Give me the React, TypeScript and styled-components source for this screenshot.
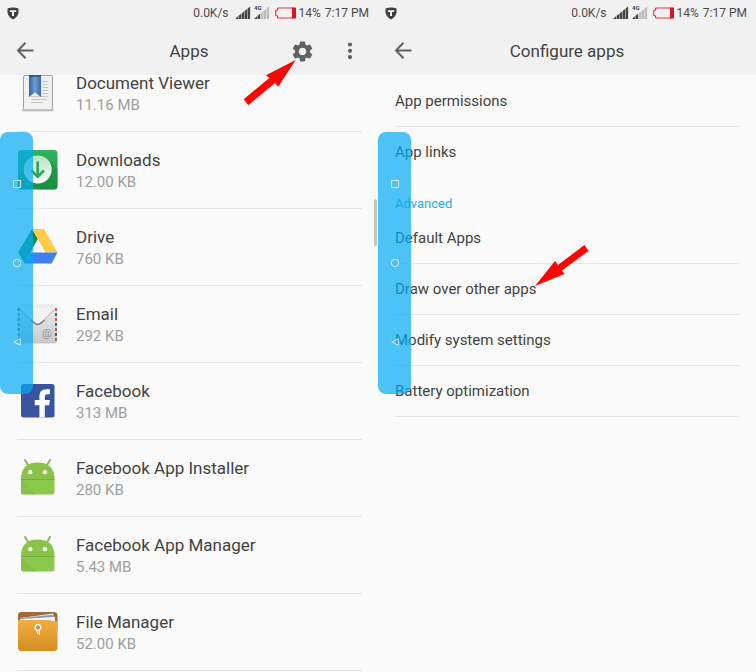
import React from "react";
import styled, { createGlobalStyle } from "styled-components";

const GlobalStyle = createGlobalStyle`
  *, *::before, *::after { box-sizing: border-box; }
  body {
    margin: 0;
    background: #fafafa;
    color: #424242;
    font-family: Roboto, "Liberation Sans", sans-serif;
  }
  h1, h2, p, ul { margin: 0; padding: 0; font-weight: 400; }
  ul { list-style: none; }
  button { border: 0; padding: 0; background: none; font: inherit; color: inherit; cursor: pointer; }
  svg { display: block; }
`;

const Screens = styled.main`
  display: grid;
  grid-template-columns: 1fr 1fr;
  min-height: 100vh;
`;

const Screen = styled.section`
  position: relative;
  display: flex;
  flex-direction: column;
  min-width: 0;
  height: 100vh;
  overflow: hidden;
`;

const Header = styled.header`
  flex: none;
  background: #f1f1f1;
`;

const StatusBar = styled.div`
  display: flex;
  align-items: center;
  height: 26px;
  padding: 0 9px 0 7px;
  font-size: 12px;
  line-height: 16px;
  color: #4a4a4a;
`;

const StatusInfo = styled.div`
  display: flex;
  align-items: center;
  gap: 3px;
  margin-left: auto;
`;

const Rate = styled.span`
  margin-right: 3px;
`;

const Charge = styled.span`
  display: flex;
  align-items: center;
  gap: 2px;
  margin-left: 2px;
`;

const Clock = styled.time`
  margin-left: 1px;
`;

const AppBar = styled.div`
  display: grid;
  grid-template-columns: 1fr auto 1fr;
  align-items: center;
  height: 49px;
  padding: 0 16px;
`;

const Title = styled.h1`
  font-size: 17px;
  line-height: 24px;
`;

const Actions = styled.div`
  display: flex;
  justify-content: flex-end;
  gap: 27px;
`;

const IconButton = styled.button`
  display: grid;
  place-items: center;
  width: 24px;
  height: 24px;
  margin-left: -3px;
  color: #616161;
`;

const ListArea = styled.div`
  flex: 1;
  min-height: 0;
`;

const AppList = styled.ul`
  margin: -20px 16px 0 17px;
`;

const AppItem = styled.li`
  border-bottom: 1px solid #e6e6e6;
`;

const AppButton = styled.button`
  display: grid;
  grid-template-columns: 41px 1fr;
  align-items: center;
  column-gap: 18px;
  width: 100%;
  height: 76px;
  padding-bottom: 1px;
  text-align: left;
`;

const AppText = styled.div`
  display: grid;
  row-gap: 6px;
  padding-top: 3px;
`;

const AppName = styled.p`
  font-size: 17px;
  line-height: 16px;
`;

const AppSize = styled.p`
  font-size: 15px;
  line-height: 16px;
  color: #9e9e9e;
`;

const Settings = styled.div`
  padding: 1px 17px 0;
`;

const SettingItem = styled.li<{ $last?: boolean }>`
  border-bottom: 1px solid ${(p) => (p.$last ? "transparent" : "#e6e6e6")};
`;

const SettingButton = styled.button`
  display: block;
  width: 100%;
  height: 50px;
  text-align: left;
  font-size: 15px;
  line-height: 20px;
`;

const SectionTitle = styled.h2`
  padding-top: 17px;
  font-size: 13px;
  line-height: 18px;
  color: #29abe2;
`;

const NavOverlay = styled.nav`
  position: absolute;
  left: 0;
  top: 132px;
  display: flex;
  flex-direction: column;
  justify-content: space-evenly;
  align-items: center;
  width: 33px;
  height: 262px;
  border-radius: 8px;
  background: rgba(3, 169, 244, 0.7);
`;

const NavButton = styled.button`
  display: grid;
  place-items: center;
  width: 32px;
  height: 53px;
`;

const ScrollThumb = styled.div`
  position: absolute;
  right: 1px;
  top: 199px;
  width: 3px;
  height: 47px;
  border-radius: 2px;
  background: #c2c2c2;
`;

const Pointer = styled.svg<{ $x: number; $y: number }>`
  position: absolute;
  left: ${(p) => p.$x}px;
  top: ${(p) => p.$y}px;
  pointer-events: none;
`;

const Shield = () => (
  <svg width="12" height="13" viewBox="0 0 12 13" aria-hidden="true">
    <path d="M0.5 1.6Q6 -0.6 11.5 1.6V5.2Q11.2 9.8 6 12.4Q0.8 9.8 0.5 5.2Z" fill="#3f3f3f" />
    <path d="M2.8 3.2H9.2V5H7V9H5V5H2.8Z" fill="#f1f1f1" />
  </svg>
);

const bars = [0, 1, 2, 3, 4];

const Signal = ({ lit, network }: { lit: number; network?: string }) => (
  <svg width="16" height="20" viewBox="0 0 16 20" role="img" aria-label="Signal">
    {bars.map((i) => {
      const x = i * 3 + 0.6;
      const top = 14 - i * 2.4;
      return (
        <path
          key={i}
          d={`M${x} 16V${top + 1.2}L${x + 2.5} ${top - 0.8}V16Z`}
          fill={i < lit ? "#444" : "#bdbdbd"}
        />
      );
    })}
    {network && (
      <text x="0" y="7" fontSize="6" fontWeight="700" fill="#444">
        {network}
      </text>
    )}
  </svg>
);

const Battery = () => (
  <svg width="22" height="12" viewBox="0 0 22 12" role="img" aria-label="Battery">
    <path d="M18 1H3.5Q2.5 1 2.5 2V3Q0.7 3.2 0.7 4V8Q0.7 8.8 2.5 9V10Q2.5 11 3.5 11H18" fill="none" stroke="#e8353a" strokeWidth="1.2" />
    <rect x="17" y="0.5" width="4" height="11" rx="0.6" fill="#dd151b" />
  </svg>
);

const Back = () => (
  <svg width="18" height="18" viewBox="0 0 18 18" fill="none" stroke="currentColor" strokeWidth="2" aria-hidden="true">
    <path d="M17.5 8.5H2.5M9.5 0.7L2 8.5L9.5 16.3" />
  </svg>
);

const Gear = () => (
  <svg width="25" height="25" viewBox="0 0 24 24" fill="currentColor" aria-hidden="true">
    <path d="M19.14 12.94c.04-.3.06-.61.06-.94 0-.32-.02-.64-.07-.94l2.03-1.58c.18-.14.23-.41.12-.61l-1.92-3.32c-.12-.22-.37-.29-.59-.22l-2.39.96c-.5-.38-1.03-.7-1.62-.94l-.36-2.54c-.04-.24-.24-.41-.48-.41h-3.84c-.24 0-.43.17-.47.41l-.36 2.54c-.59.24-1.13.57-1.62.94l-2.39-.96c-.22-.08-.47 0-.59.22L2.74 8.87c-.12.21-.08.47.12.61l2.03 1.58c-.05.3-.09.63-.09.94s.02.64.07.94l-2.03 1.58c-.18.14-.23.41-.12.61l1.92 3.32c.12.22.37.29.59.22l2.39-.96c.5.38 1.03.7 1.62.94l.36 2.54c.05.24.24.41.48.41h3.84c.24 0 .44-.17.47-.41l.36-2.54c.59-.24 1.13-.56 1.62-.94l2.39.96c.22.08.47 0 .59-.22l1.92-3.32c.12-.22.07-.47-.12-.61l-2.01-1.58zM12 15.6c-1.98 0-3.6-1.62-3.6-3.6s1.62-3.6 3.6-3.6 3.6 1.62 3.6 3.6-1.62 3.6-3.6 3.6z" />
  </svg>
);

const Dots = () => (
  <svg width="6" height="18" viewBox="0 0 6 18" fill="currentColor" aria-hidden="true">
    <circle cx="3" cy="2.5" r="2.1" />
    <circle cx="3" cy="8.8" r="2.1" />
    <circle cx="3" cy="15.1" r="2.1" />
  </svg>
);

const DocumentIcon = () => (
  <svg width="41" height="41" viewBox="0 0 41 41" aria-hidden="true">
    <defs>
      <linearGradient id="ribbon" x1="0" x2="1">
        <stop offset="0" stopColor="#3465a4" />
        <stop offset="0.5" stopColor="#6f9bd0" />
        <stop offset="1" stopColor="#3a69a8" />
      </linearGradient>
    </defs>
    <rect x="4.5" y="37" width="32.5" height="2.6" rx="1.3" fill="#cfcfcf" />
    <rect x="6.5" y="3.5" width="29" height="34.5" rx="1.5" fill="#f0f0ef" stroke="#a0a19f" />
    <path d="M25 9.5H31M25 12.5H31M25 15.5H31M25 18.5H31M25 21.5H31M14 24.5H31M14 27.5H30M14 30.5H26" stroke="#c6c7c5" />
    <path d="M12 3H24V25L18 20.5L12 25Z" fill="url(#ribbon)" />
    <path d="M12 4H24" stroke="#28507f" strokeWidth="1.5" />
  </svg>
);

const DownloadsIcon = () => (
  <svg width="41" height="41" viewBox="0 0 41 41" aria-hidden="true">
    <defs>
      <linearGradient id="dlBack" x1="0" y1="0" x2="0" y2="1">
        <stop offset="0" stopColor="#2fb45f" />
        <stop offset="1" stopColor="#1c9446" />
      </linearGradient>
      <linearGradient id="dlDisc" x1="0" y1="0" x2="0" y2="1">
        <stop offset="0" stopColor="#b6e3c3" />
        <stop offset="1" stopColor="#fbfefb" />
      </linearGradient>
    </defs>
    <rect x="1" y="1" width="39.5" height="39.5" rx="3.5" fill="url(#dlBack)" />
    <path d="M30.5 10L40.5 20V37Q40.5 40.5 37 40.5H21L11 30Z" fill="#15893b" opacity="0.45" />
    <circle cx="20.7" cy="20.5" r="14" fill="url(#dlDisc)" />
    <path d="M20.7 12.5V27M14.5 21.5L20.7 27.7L26.9 21.5" fill="none" stroke="#2ba455" strokeWidth="2.6" />
  </svg>
);

const DriveIcon = () => (
  <svg width="41" height="41" viewBox="0 0 41 41" aria-hidden="true">
    <path d="M15 3L20.7 13L7.5 37.5L1 26.5Z" fill="#159b62" />
    <path d="M15 3H27L40.5 26.5H28.5Z" fill="#fdce45" />
    <path d="M13.5 26.5H40.5L34.5 37.5H7.5Z" fill="#4080f3" />
    <path d="M15 3L20.7 13L16.5 20Z" fill="#0b804c" opacity="0.6" />
  </svg>
);

const EmailIcon = () => (
  <svg width="41" height="41" viewBox="0 0 41 41" aria-hidden="true">
    <defs>
      <linearGradient id="mailBack" x1="0" y1="0" x2="0" y2="1">
        <stop offset="0" stopColor="#eeeeee" />
        <stop offset="1" stopColor="#c9c9ca" />
      </linearGradient>
    </defs>
    <rect x="1" y="1" width="39" height="39.5" rx="3" fill="url(#mailBack)" />
    <path d="M3 5L17.5 19.5Q20.7 22.5 24 19.5L37.5 5" fill="#f3f3f3" />
    <path d="M3 7L17.5 20Q20.7 23 24 20L37 7" fill="none" stroke="#b5b5b5" />
    <path d="M14 17L17.5 20Q20.7 23 24 20L27.5 17" fill="none" stroke="#777" strokeWidth="1.5" />
    <path d="M3 37L15 21M37 34L26 21" stroke="#e0e0e0" />
    <path d="M1.7 5V39" stroke="#4671a8" strokeWidth="2" strokeDasharray="3 7" />
    <path d="M1.7 10V39" stroke="#c4625a" strokeWidth="2" strokeDasharray="3 7" />
    <path d="M39 5V39" stroke="#cf554d" strokeWidth="2" strokeDasharray="3 7" />
    <path d="M39 10V39" stroke="#32629b" strokeWidth="2" strokeDasharray="3 7" />
    <text x="25" y="33.5" fontSize="11" fill="#929292">@</text>
  </svg>
);

const FacebookIcon = () => (
  <svg width="41" height="41" viewBox="0 0 41 41" aria-hidden="true">
    <rect x="4" y="4" width="33.5" height="33.5" rx="2.5" fill="#3a559f" />
    <path d="M22.4 37.5V25.2H17.7V20H22.4V16Q22.4 9.2 29.3 9.2H33V14.3H30.3Q27.8 14.3 27.8 16.7V20H32.9L32.2 25.2H27.8V37.5Z" fill="#fff" />
  </svg>
);

const AndroidIcon = () => (
  <svg width="41" height="41" viewBox="0 0 41 41" aria-hidden="true">
    <path d="M8 3L11.5 9M33 3L29.5 9" stroke="#8ab661" strokeWidth="2" strokeLinecap="round" />
    <path d="M4 22.5Q4 5.5 20.7 5.5Q37.5 5.5 37.5 22.5Z" fill="#8bc34a" />
    <path d="M4 22.5H37.5V35Q37.5 37.5 35 37.5H6.5Q4 37.5 4 35Z" fill="#8bc84b" />
    <path d="M4 22.5L19 37.5H6.5Q4 37.5 4 35Z" fill="#7db343" opacity="0.4" />
    <path d="M4 22.5H37.5" stroke="#76ae40" />
    <circle cx="13.3" cy="15.2" r="2.1" fill="#fff" />
    <circle cx="27.9" cy="15.2" r="2.1" fill="#fff" />
  </svg>
);

const FilesIcon = () => (
  <svg width="41" height="41" viewBox="0 0 41 41" aria-hidden="true">
    <defs>
      <linearGradient id="folder" x1="0" y1="0" x2="0" y2="1">
        <stop offset="0" stopColor="#f0ae42" />
        <stop offset="1" stopColor="#d48e23" />
      </linearGradient>
    </defs>
    <rect x="1" y="1" width="39.5" height="20" rx="3.5" fill="#a06b36" />
    <path d="M3 7L36 2.5L38 11H3Z" fill="#e3e5e9" />
    <path d="M3 7L35 4L37 6L3 9Z" fill="#8996ab" />
    <path d="M3 8L38 6V12H3Z" fill="#f6f6f6" />
    <path d="M1 9H33L36 10H40.5V36.5Q40.5 40 37 40H4.5Q1 40 1 36.5Z" fill="url(#folder)" />
    <path d="M20 19L21 23M22 18L22.5 24" stroke="#fff5df" strokeWidth="1.1" />
    <circle cx="21" cy="16.5" r="2.8" fill="#c5954d" stroke="#fff" strokeWidth="1.3" />
  </svg>
);

const apps = [
  { name: "Document Viewer", size: "11.16 MB", Icon: DocumentIcon },
  { name: "Downloads", size: "12.00 KB", Icon: DownloadsIcon },
  { name: "Drive", size: "760 KB", Icon: DriveIcon },
  { name: "Email", size: "292 KB", Icon: EmailIcon },
  { name: "Facebook", size: "313 MB", Icon: FacebookIcon },
  { name: "Facebook App Installer", size: "280 KB", Icon: AndroidIcon },
  { name: "Facebook App Manager", size: "5.43 MB", Icon: AndroidIcon },
  { name: "File Manager", size: "52.00 KB", Icon: FilesIcon },
];

const general = ["App permissions", "App links"];
const advanced = ["Default Apps", "Draw over other apps", "Modify system settings", "Battery optimization"];

const PhoneStatus = () => (
  <StatusBar>
    <Shield />
    <StatusInfo>
      <Rate>0.0K/s</Rate>
      <Signal lit={5} />
      <Signal lit={2} network="4G" />
      <Charge>
        <Battery />
        14%
      </Charge>
      <Clock>7:17 PM</Clock>
    </StatusInfo>
  </StatusBar>
);

const FloatingNav = () => (
  <NavOverlay aria-label="Navigation keys">
    <NavButton aria-label="Recent apps">
      <svg width="10" height="10" viewBox="0 0 10 10" fill="none" stroke="#d9f2ff">
        <rect x="1.5" y="1.5" width="7" height="7" />
      </svg>
    </NavButton>
    <NavButton aria-label="Home">
      <svg width="10" height="10" viewBox="0 0 10 10" fill="none" stroke="#d9f2ff">
        <circle cx="5" cy="5" r="3.7" />
      </svg>
    </NavButton>
    <NavButton aria-label="Back">
      <svg width="10" height="10" viewBox="0 0 10 10" fill="none" stroke="#d9f2ff">
        <path d="M8.2 1.8V8.2L1.8 5Z" />
      </svg>
    </NavButton>
  </NavOverlay>
);

export default function App() {
  return (
    <>
      <GlobalStyle />
      <Screens>
        <Screen>
          <Header>
            <PhoneStatus />
            <AppBar>
              <IconButton aria-label="Back"><Back /></IconButton>
              <Title>Apps</Title>
              <Actions>
                <IconButton aria-label="Settings"><Gear /></IconButton>
                <IconButton aria-label="More options"><Dots /></IconButton>
              </Actions>
            </AppBar>
          </Header>
          <ListArea>
            <AppList>
              {apps.map(({ name, size, Icon }) => (
                <AppItem key={name}>
                  <AppButton>
                    <Icon />
                    <AppText>
                      <AppName>{name}</AppName>
                      <AppSize>{size}</AppSize>
                    </AppText>
                  </AppButton>
                </AppItem>
              ))}
            </AppList>
          </ListArea>
          <ScrollThumb />
          <FloatingNav />
          <Pointer $x={243} $y={59} width="54" height="48" viewBox="243 59 54 48" aria-hidden="true">
            <path d="M295.6 60L266 75.3L269.3 78L243.7 99.3L248.3 105.3L275 83L278.3 86.7Z" fill="#fb0404" />
          </Pointer>
        </Screen>
        <Screen>
          <Header>
            <PhoneStatus />
            <AppBar>
              <IconButton aria-label="Back"><Back /></IconButton>
              <Title>Configure apps</Title>
            </AppBar>
          </Header>
          <Settings>
            <ul>
              {general.map((label, i) => (
                <SettingItem key={label} $last={i === general.length - 1}>
                  <SettingButton>{label}</SettingButton>
                </SettingItem>
              ))}
            </ul>
            <SectionTitle>Advanced</SectionTitle>
            <ul>
              {advanced.map((label) => (
                <SettingItem key={label}>
                  <SettingButton>{label}</SettingButton>
                </SettingItem>
              ))}
            </ul>
          </Settings>
          <FloatingNav />
          <Pointer $x={156} $y={243} width="56" height="46" viewBox="534 243 56 46" aria-hidden="true">
            <path d="M535 286L555 261L558 265L584.5 245L588.5 251L562 270.5L564.5 274Z" fill="#fb0404" />
          </Pointer>
        </Screen>
      </Screens>
    </>
  );
}
